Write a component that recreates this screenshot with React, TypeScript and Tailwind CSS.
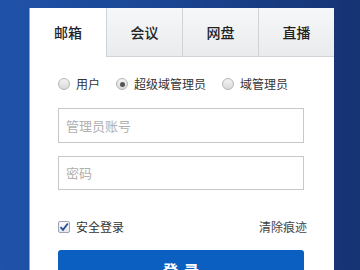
import React from "react";

const font = { fontFamily: '"Microsoft YaHei", "Noto Sans CJK SC", sans-serif' };

function Radio({ checked, label }: { checked?: boolean; label: string }) {
  return (
    <label className="flex items-center gap-[6px]">
      <span className="w-[12px] h-[12px] rounded-full border border-[#b5b5b5] bg-gradient-to-b from-[#f4f4f4] to-[#d9d9d9] flex items-center justify-center">
        {checked && <span className="w-[5px] h-[5px] rounded-full bg-[#555]" />}
      </span>
      <span className="text-[12px] text-[#333] leading-none">{label}</span>
    </label>
  );
}

export default function App() {
  const tabs = ["邮箱", "会议", "网盘", "直播"];
  return (
    <div
      className="w-[360px] h-[270px] overflow-hidden bg-gradient-to-r from-[#1f52a8] via-[#1a4490] to-[#163373] pt-[8px] pl-[29px]"
      style={font}
    >
      <div className="w-[305px] h-[300px] bg-white border-l border-[#9aa3b0]">
        <div className="flex h-[49px]">
          {tabs.map((t, i) => (
            <div
              key={t}
              className={
                i === 0
                  ? "w-[76px] flex items-center justify-center bg-white text-[14px] font-medium text-[#222]"
                  : "w-[76px] flex items-center justify-center bg-gradient-to-b from-[#f6f7f8] to-[#e9ebed] border-l border-b border-[#cfd3d7] text-[14px] font-medium text-[#222]"
              }
            >
              {t}
            </div>
          ))}
        </div>
        <div className="pl-[28px] w-[274px]">
          <div className="flex items-center gap-[16px] h-[20px] mt-[17px]">
            <Radio label="用户" />
            <Radio checked label="超级域管理员" />
            <Radio label="域管理员" />
          </div>
          <div className="mt-[14px] h-[35px] border border-[#c8c8c8] flex items-center pl-[7px] text-[13px] text-[#b0b0b0]">
            管理员账号
          </div>
          <div className="mt-[13px] h-[34px] border border-[#c8c8c8] flex items-center pl-[7px] text-[13px] text-[#b0b0b0]">
            密码
          </div>
          <div className="mt-[29px] flex items-center justify-between h-[16px]">
            <label className="flex items-center gap-[6px]">
              <span className="w-[12px] h-[12px] border border-[#9aa4b4] rounded-[2px] bg-gradient-to-b from-[#fafafa] to-[#e4e7ec] flex items-center justify-center">
                <svg width="10" height="10" viewBox="0 0 10 10">
                  <path d="M1.5 5.2 L4 7.8 L8.8 1.5" stroke="#2a4f8f" strokeWidth="1.8" fill="none" />
                </svg>
              </span>
              <span className="text-[12px] text-[#333] leading-none">安全登录</span>
            </label>
            <span className="text-[12px] text-[#444] leading-none mr-[-3px]">清除痕迹</span>
          </div>
          <div className="mt-[15px] h-[40px] rounded-[3px] bg-[#0b5fc0] flex items-center justify-center text-white text-[15px] font-bold tracking-[6px] pl-[6px]">
            登录
          </div>
        </div>
      </div>
    </div>
  );
}
